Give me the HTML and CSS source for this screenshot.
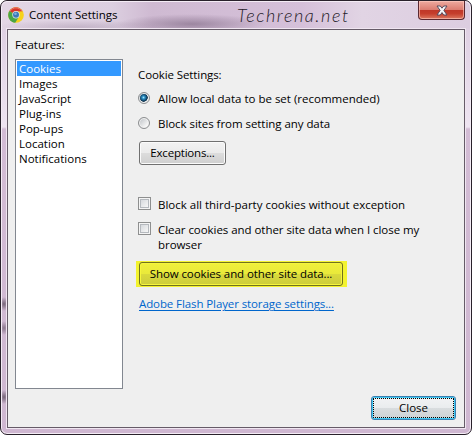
FILE: index.html
```html
<!DOCTYPE html>
<html lang="en">
<head>
    <meta charset="UTF-8">
    <meta name="viewport" content="width=device-width, initial-scale=1.0">
    <title>Content Settings</title>
    <link rel="stylesheet" href="styles.css">
</head>
<body>
    <div class="window">
        <div class="titlebar">
            <svg class="logo" width="16" height="16" viewBox="0 0 16 16">
                <circle cx="8" cy="8" r="7.8" fill="#f6d21c" />
                <path d="M8 8 L1.3 4 A7.8 7.8 0 0 1 14.7 4.3 L8 4.5 Z" fill="#d8352a" />
                <path d="M1.3 4 A7.8 7.8 0 0 0 7.2 15.8 L10.5 10.5 L8 8 Z" fill="#4aa546" />
                <path d="M2.2 4 A7 7 0 0 1 13.8 4" fill="none" stroke="#ef8a78" stroke-width="0.8" />
                <circle cx="8" cy="7.7" r="3.7" fill="#dfe6ee" />
                <circle cx="8" cy="7.7" r="3" fill="#3c78b8" />
                <circle cx="7.5" cy="6.8" r="1.3" fill="#7fb0dc" />
            </svg>
            <span class="title">Content Settings</span>
            <span class="watermark">Techrena.net</span>
            <div class="close-x">
                <svg width="12" height="11" viewBox="0 0 12 11">
                    <path d="M1 1 H4.3 L6 3.2 L7.7 1 H11 L7.9 5.4 L11 10 H7.7 L6 7.6 L4.3 10 H1 L4.1 5.4 Z" fill="#f4f4f6" stroke="#574a5c" stroke-width="1" />
                </svg>
            </div>
        </div>
        <div class="client">
            <div class="sidebar">
                <div class="label features">Features:</div>
                <ul class="list">
                    <li class="selected">Cookies</li>
                    <li>Images</li>
                    <li>JavaScript</li>
                    <li>Plug-ins</li>
                    <li>Pop-ups</li>
                    <li>Location</li>
                    <li>Notifications</li>
                </ul>
            </div>
            <div class="panel">
                <div class="label heading">Cookie Settings:</div>
                <div class="option">
                    <span class="radio checked"></span>
                    <span class="text allow">Allow local data to be set (recommended)</span>
                </div>
                <div class="option">
                    <span class="radio"></span>
                    <span class="text sites">Block sites from setting any data</span>
                </div>
                <button class="button exceptions">Exceptions...</button>
                <div class="option">
                    <span class="checkbox"></span>
                    <span class="text third">Block all third-party cookies without exception</span>
                </div>
                <div class="option">
                    <span class="checkbox"></span>
                    <span class="text clear">Clear cookies and other site data when I close my<br>browser</span>
                </div>
                <div class="highlight">
                    <button class="button show">Show cookies and other site data...</button>
                </div>
                <a class="link" href="#">Adobe Flash Player storage settings...</a>
                <button class="button close">Close</button>
            </div>
        </div>
    </div>
</body>
</html>
```
FILE: styles.css
```css
* {
  box-sizing: border-box;
}

body {
  margin: 0;
  background: #fff;
  font-family: "Open Sans", "Noto Sans", sans-serif;
  font-size: 11.5px;
  line-height: 15px;
  color: #000;
}

.window {
  display: flex;
  flex-direction: column;
  width: 472px;
  height: 435px;
  padding: 0 6px 6px;
  border: 1px solid #29212b;
  border-radius: 7px;
  box-shadow: inset 0 0 0 1px #f4ecf5;
  /* glass frame: dark smudges down the left edge, pale band above y=128 */
  background:
    radial-gradient(ellipse 5px 7px at 3px 303px, #756477, transparent),
    radial-gradient(ellipse 5px 7px at 3px 327px, #8b778d, transparent),
    radial-gradient(ellipse 5px 7px at 3px 396px, #756477, transparent),
    linear-gradient(#dccade 0, #dfd1e3 30px, #eee4f1 126px, #d3bcd5 128px, #cfb7d1 100%);
}

.titlebar {
  display: flex;
  flex: none;
  align-items: flex-start;
  height: 28px;
  margin: 0 -5px;
  padding-left: 6px;
  border-top: 1px solid #f4ecf5;
  border-radius: 6px 6px 0 0;
  background:
    radial-gradient(ellipse 75px 10px at 190px 22px, rgba(105, 82, 110, 0.5), transparent),
    radial-gradient(ellipse 85px 7px at 75px 25px, rgba(120, 95, 125, 0.25), transparent),
    linear-gradient(90deg, #e3d6e5, #dccfe0 110px, #cfbad2 150px, #d5c0d9 300px, #e1d4e4 360px, #dccde0);
}

.logo {
  margin-top: 5px;
}

.title {
  width: 208px;
  margin: 5px 0 0 5px;
}

.watermark {
  width: 181px;
  margin-top: 2px;
  font-family: "Lato", sans-serif;
  font-size: 18px;
  font-style: italic;
  font-weight: 300;
  line-height: 23px;
  letter-spacing: 1.6px;
  color: #252028;
}

.close-x {
  display: flex;
  align-items: center;
  justify-content: center;
  width: 47px;
  height: 19px;
  margin-top: -1px;
  border: 1px solid #5a2830;
  border-top: 0;
  border-radius: 0 0 4px 4px;
  box-shadow: inset 0 0 0 1px rgba(255, 205, 195, 0.6);
  background: linear-gradient(#eeaaa0, #dc7d71 48%, #bf3728 50%, #c53e2c 70%, #dc7860);
}

.client {
  display: flex;
  flex: 1;
  padding: 7px 8px 7px 7px;
  border: 1px solid #665b68;
  box-shadow: 0 0 0 1px #f0e6f1;
  background: #efefef;
}

.sidebar {
  width: 108px;
}

.list {
  height: 330px;
  margin: 7px 0 0;
  padding: 1px;
  border: 1px solid #828790;
  background: #fff;
  list-style: none;
}

.list li {
  height: 15px;
  padding-left: 2px;
}

.list .selected {
  background: #3399ff;
  color: #fff;
}

.panel {
  display: flex;
  flex: 1;
  flex-direction: column;
  align-items: flex-start;
  padding: 30px 0 0 15px;
  white-space: nowrap;
}

.heading {
  margin-bottom: 9px;
  letter-spacing: -0.1px;
}

.option {
  display: flex;
  margin-bottom: 10px;
}

.radio {
  width: 12px;
  height: 12px;
  margin: 1px 8px 0 0;
  border: 1px solid #8b8d8f;
  border-radius: 50%;
  box-shadow: inset 0 0 0 1px #f2f2f2;
  background: linear-gradient(135deg, #b9bdc2, #f6f6f6 75%);
}

.radio.checked {
  background: radial-gradient(circle at 4.5px 4.5px, #a5e4fa 0, #2a8dc2 1.5px, #0d3c5e 3.5px, #16344b 4px, #dfe3e6 4.5px);
}

.checkbox {
  width: 13px;
  height: 13px;
  margin-right: 7px;
  border: 1px solid #8e8f8f;
  box-shadow: inset 0 0 0 1px #f4f4f4, inset 0 0 0 2px #b5b9be;
  background: linear-gradient(135deg, #cdd1d6, #f6f6f6 80%);
}

.sites,
.clear {
  letter-spacing: -0.05px;
}

.button {
  height: 24px;
  padding: 0 0 1px;
  border: 1px solid #707070;
  border-radius: 3px;
  box-shadow: inset 0 0 0 1px #fbfbfb;
  background: linear-gradient(#f2f2f2, #ebebeb 50%, #dddddd 50%, #cfcfcf);
  font: inherit;
  color: #000;
}

.exceptions {
  width: 87px;
  margin: 0 0 32px 1px;
  letter-spacing: -0.2px;
}

.highlight {
  width: 211px;
  height: 26px;
  margin: -1px 0 9px -2px;
  padding: 1px 0 0 3px;
  background: #f3f32f;
}

.show {
  display: block;
  width: 204px;
  border-color: #71711f;
  box-shadow: inset 0 0 0 1px #f6f63c;
  background: linear-gradient(#f0f03c, #e9e93a 50%, #dada3c 50%, #cccc3b);
  letter-spacing: -0.1px;
}

.link {
  margin-left: 1px;
  letter-spacing: -0.1px;
  color: #0066cc;
  text-underline-offset: 2px;
}

.close {
  width: 85px;
  margin: auto 0 0 auto;
  border-color: #3c7fb1;
  box-shadow: inset 0 0 0 1px #3fc9f3;
  outline: 1px dotted #000;
  outline-offset: -3px;
  background: linear-gradient(#f2f3f4, #e9ecee 50%, #d9dddf 50%, #cdd2d4);
}
```
